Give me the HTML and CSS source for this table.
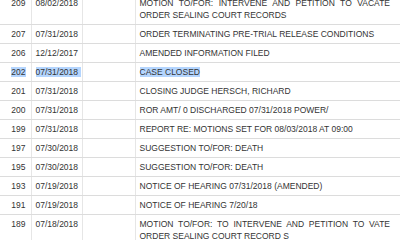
FILE: index.html
```html
<!DOCTYPE html>
<html>
<head>
<meta charset="utf-8">
<link rel="stylesheet" href="styles.css">
</head>
<body>
<table class="docket">
  <colgroup>
    <col class="c-num"><col class="c-date"><col class="c-blank"><col class="c-desc">
  </colgroup>
  <tbody>
    <tr><td class="num">209</td><td class="date">08/02/2018</td><td></td><td class="desc">MOTION TO/FOR: INTERVENE AND PETITION TO VACATE ORDER SEALING COURT RECORDS</td></tr>
    <tr><td class="num">207</td><td class="date">07/31/2018</td><td></td><td class="desc">ORDER TERMINATING PRE-TRIAL RELEASE CONDITIONS</td></tr>
    <tr><td class="num">206</td><td class="date">12/12/2017</td><td></td><td class="desc">AMENDED INFORMATION FILED</td></tr>
    <tr><td class="num"><span class="sel">202</span></td><td class="date"><span class="sel sel-date">07/31/2018</span></td><td></td><td class="desc"><span class="sel">CASE CLOSED</span></td></tr>
    <tr><td class="num">201</td><td class="date">07/31/2018</td><td></td><td class="desc">CLOSING JUDGE HERSCH, RICHARD</td></tr>
    <tr><td class="num">200</td><td class="date">07/31/2018</td><td></td><td class="desc">ROR AMT/ 0 DISCHARGED 07/31/2018 POWER/</td></tr>
    <tr><td class="num">199</td><td class="date">07/31/2018</td><td></td><td class="desc">REPORT RE: MOTIONS SET FOR 08/03/2018 AT 09:00</td></tr>
    <tr><td class="num">197</td><td class="date">07/30/2018</td><td></td><td class="desc">SUGGESTION TO/FOR: DEATH</td></tr>
    <tr><td class="num">195</td><td class="date">07/30/2018</td><td></td><td class="desc">SUGGESTION TO/FOR: DEATH</td></tr>
    <tr><td class="num">193</td><td class="date">07/19/2018</td><td></td><td class="desc">NOTICE OF HEARING 07/31/2018 (AMENDED)</td></tr>
    <tr><td class="num">191</td><td class="date">07/19/2018</td><td></td><td class="desc">NOTICE OF HEARING 7/20/18</td></tr>
    <tr><td class="num">189</td><td class="date">07/18/2018</td><td></td><td class="desc">MOTION TO/FOR: TO INTERVENE AND PETITION TO VATE ORDER SEALING COURT RECORD S</td></tr>
  </tbody>
</table>
</body>
</html>
```
FILE: styles.css
```css
html, body {
  margin: 0;
  padding: 0;
  background: #ffffff;
  overflow: hidden;
}
.docket {
  width: 400px;
  margin-top: -6px;
  border-collapse: collapse;
  table-layout: fixed;
  font-family: "Liberation Sans", Arial, sans-serif;
  font-size: 8.5px;
  line-height: 12px;
  color: #333333;
}
.c-num { width: 31px; }
.c-date { width: 51px; }
.c-blank { width: 53px; }
.docket td {
  border-bottom: 1px solid #dcdcdc;
  border-right: 1px solid #e6e6e6;
  padding: 3px 4px;
  vertical-align: top;
}
.docket td:last-child {
  border-right: none;
}
.num {
  text-align: right;
  padding-right: 5px !important;
}
.desc {
  text-align: justify;
  padding-right: 10px !important;
}
.sel {
  background: #b4d5fe;
}
.sel-date {
  padding-right: 3px;
}
```
